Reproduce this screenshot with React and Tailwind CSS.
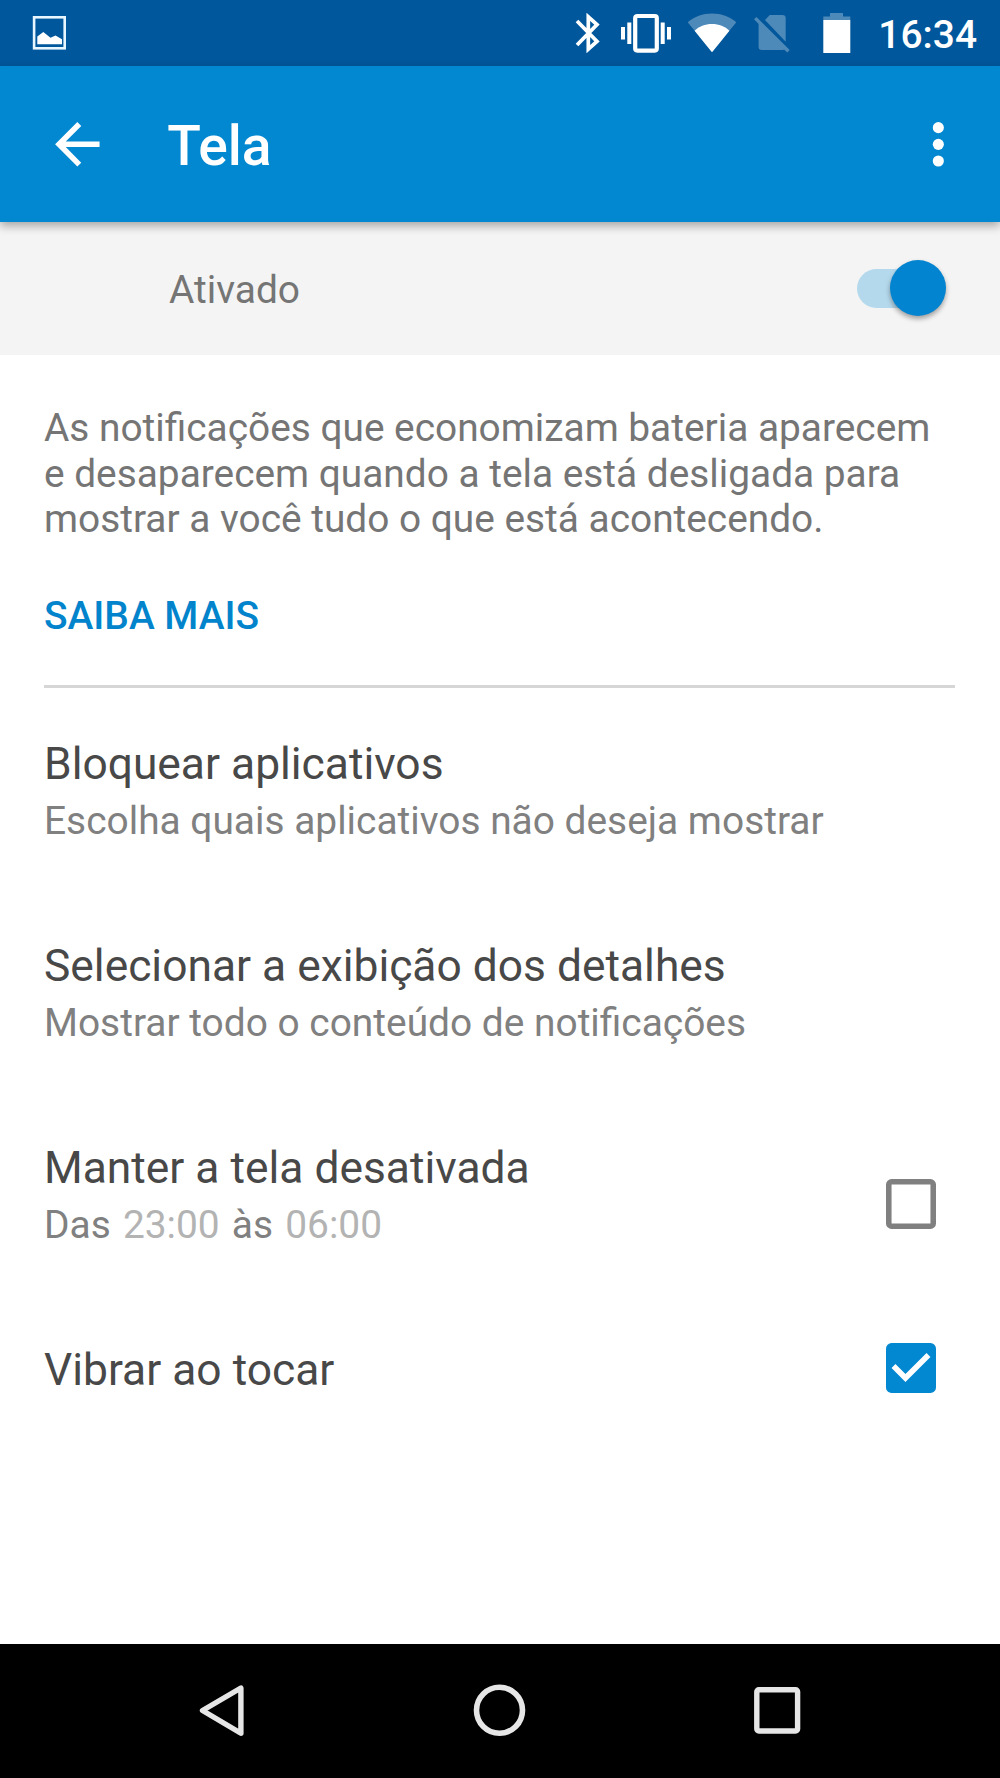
import React, { useState } from 'react';

function StatusBar() {
  return (
    <div className="flex h-[66px] items-center bg-[#01579b] pl-[32px] pr-[23px] text-white">
      {/* Screenshot notification */}
      <svg width="36" height="36" viewBox="0 0 36 36" fill="none">
        <rect x="2.1" y="2.3" width="30.6" height="31" stroke="#e8f6ff" strokeWidth="2.6" />
        <path d="M5.3 29.3V21.5L11.3 17L18.5 22.8L23.5 20.5L30 24.2V29.3Z" fill="white" />
      </svg>

      <div className="ml-auto flex items-center">
        {/* Bluetooth */}
        <svg width="26" height="40" viewBox="0 0 26 40" fill="none" stroke="white" strokeWidth="3.7">
          <path d="M2 8L22 28.5L13.3 36.2V3.8L22 11.5L2 32" />
        </svg>

        {/* Vibrate */}
        <svg className="ml-[19px]" width="52" height="40" viewBox="0 0 52 40" fill="none">
          <rect x="15.2" y="3" width="21.6" height="34.6" rx="2" stroke="white" strokeWidth="4.2" />
          <path d="M3 14V26.5M9.3 9.5V31M42.7 9.5V31M49 14V26.5" stroke="white" strokeWidth="4" />
        </svg>

        {/* Wi-Fi */}
        <svg className="ml-[15px]" width="50" height="40" viewBox="0 0 50 40">
          <path d="M0.7 9.2C7.5 3.8 15.5 0.5 25 0.5S42.5 3.8 49.3 9.2L25 39.3Z" fill="white" fillOpacity="0.3" />
          <path d="M7.6 17.7C12 13.2 18 10.9 25 10.9S38 13.2 42.4 17.7L25 39.3Z" fill="white" />
        </svg>

        {/* No SIM */}
        <svg className="ml-[17px]" width="36" height="40" viewBox="0 0 36 40" fill="white" fillOpacity="0.3">
          <path d="M31.7 28.7V5.3Q31.7 2 28.5 2H15.8L11 7.1Z" />
          <path d="M0 6.3L2.5 3.9L35.7 37L33.3 39.5L30 36.4Q29.4 37 28.3 37H7.7Q4.6 37 4.6 33.8V10.9Z" />
        </svg>

        {/* Battery */}
        <svg className="ml-[33px]" width="28" height="40" viewBox="0 0 28 40" fill="white">
          <path d="M7 0H20V3.4H27.3V7H0.3V3.4H7Z" fillOpacity="0.3" />
          <path d="M0.3 7H27.3V40H0.3Z" />
        </svg>

        <span className="ml-[27px] mt-[4px] text-[38.9px] font-medium leading-[45.6px]">16:34</span>
      </div>
    </div>
  );
}

function AppBar() {
  return (
    <header className="relative z-10 flex h-[156px] items-center bg-[#0288d1] pl-[44px] pr-[28px] text-white shadow-[0_4px_9px_rgba(0,0,0,0.32)]">
      <button>
        <svg width="66.67" height="66.67" viewBox="0 0 24 24" fill="currentColor">
          <path d="M20 11H7.83l5.59-5.59L12 4l-8 8 8 8 1.41-1.41L7.83 13H20v-2z" />
        </svg>
      </button>
      <h1 className="ml-[56.5px] mt-[5px] text-[55.2px] font-medium leading-[65px]">Tela</h1>
      <button className="ml-auto">
        <svg width="66.67" height="66.67" viewBox="0 0 24 24" fill="currentColor">
          <circle cx="12" cy="6" r="2" />
          <circle cx="12" cy="12" r="2" />
          <circle cx="12" cy="18" r="2" />
        </svg>
      </button>
    </header>
  );
}

function Toggle({ on, onChange }) {
  return (
    <button
      role="switch"
      aria-checked={on}
      onClick={() => onChange(!on)}
      className={`mb-[1px] flex h-[39px] w-[83px] items-center rounded-full ${on ? 'bg-[#b5d9ec]' : 'bg-[#b9b9b9]'}`}
    >
      <span
        className={`h-[56px] w-[56px] shrink-0 rounded-full shadow-[0_3px_5px_rgba(0,0,0,0.35)] ${
          on ? 'ml-[33px] bg-[#0284d0]' : 'bg-[#f1f1f1]'
        }`}
      />
    </button>
  );
}

function Checkbox({ checked, onChange, className }) {
  return (
    <button
      role="checkbox"
      aria-checked={checked}
      onClick={() => onChange(!checked)}
      className={`h-[50px] w-[50px] shrink-0 ${className}`}
    >
      <svg width="50" height="50" viewBox="3 3 18 18">
        {checked ? (
          <>
            <rect x="3" y="3" width="18" height="18" rx="2" fill="#0288d1" />
            <path d="M10 17l-5-5 1.41-1.41L10 14.17l7.59-7.59L19 8z" fill="white" />
          </>
        ) : (
          <rect x="4" y="4" width="16" height="16" rx="1" fill="none" stroke="#808080" strokeWidth="2" />
        )}
      </svg>
    </button>
  );
}

function SettingRow({ title, summary, children }) {
  return (
    <div className="flex items-start justify-between pb-[48px] pr-[20px] pt-[48.4px]">
      <div>
        <p className="text-[44.35px] leading-[52px] text-[#484848]">{title}</p>
        {summary && <p className="mt-[8px] text-[38.88px] leading-[45.6px] text-[#808080]">{summary}</p>}
      </div>
      {children}
    </div>
  );
}

function Time({ children }) {
  return <span className="mx-[2.5px] text-[#b3b3b3]">{children}</span>;
}

function NavBar() {
  return (
    <nav className="flex h-[134px] items-center justify-between bg-black px-[192px] pb-[2px]">
      <svg width="60" height="60" viewBox="0 0 60 60" fill="none" stroke="#e6e6e6" strokeLinejoin="round">
        <path d="M10.5 30.5L48.9 8V53.3Z" strokeWidth="5.4" />
      </svg>
      <svg width="60" height="60" viewBox="0 0 60 60" fill="none" stroke="#e6e6e6">
        <circle cx="29.5" cy="30.3" r="23" strokeWidth="5.6" />
      </svg>
      <svg width="60" height="60" viewBox="0 0 60 60" fill="none" stroke="#e6e6e6">
        <rect x="8.8" y="9.8" width="40.8" height="41.2" rx="2" strokeWidth="5.4" />
      </svg>
    </nav>
  );
}

export default function App() {
  const [enabled, setEnabled] = useState(true);
  const [keepOff, setKeepOff] = useState(false);
  const [vibrate, setVibrate] = useState(true);

  return (
    <div className="flex h-[1778px] w-[1000px] flex-col overflow-hidden bg-white font-['Roboto',sans-serif]">
      <StatusBar />
      <AppBar />

      <div className="flex h-[133px] items-center justify-between bg-[#f4f4f4] pl-[169px] pr-[60px]">
        <span className="mt-[3px] text-[38.9px] leading-[45.6px] text-[#757575]">Ativado</span>
        <Toggle on={enabled} onChange={setEnabled} />
      </div>

      <main className="flex-1 px-[44px] pt-[50px]">
        <p className="text-[38.83px] leading-[45.5px] text-[#757575]">
          As notificações que economizam bateria aparecem
          <br />
          e desaparecem quando a tela está desligada para
          <br />
          mostrar a você tudo o que está acontecendo.
        </p>
        <a className="mt-[51px] block text-[38.9px] font-medium leading-[45.5px] text-[#0284cc]">SAIBA MAIS</a>

        <div className="mt-[47px] h-[3px] w-[911px] bg-[#d6d6d6]" />

        <div className="pt-[1.6px]">
          <SettingRow title="Bloquear aplicativos" summary="Escolha quais aplicativos não deseja mostrar" />
          <SettingRow title="Selecionar a exibição dos detalhes" summary="Mostrar todo o conteúdo de notificações" />
          <SettingRow
            title="Manter a tela desativada"
            summary={
              <>
                Das <Time>23:00</Time> às <Time>06:00</Time>
              </>
            }
          >
            <Checkbox checked={keepOff} onChange={setKeepOff} className="mt-[37px]" />
          </SettingRow>
          <SettingRow title="Vibrar ao tocar">
            <Checkbox checked={vibrate} onChange={setVibrate} className="-mt-[1px]" />
          </SettingRow>
        </div>
      </main>

      <NavBar />
    </div>
  );
}
